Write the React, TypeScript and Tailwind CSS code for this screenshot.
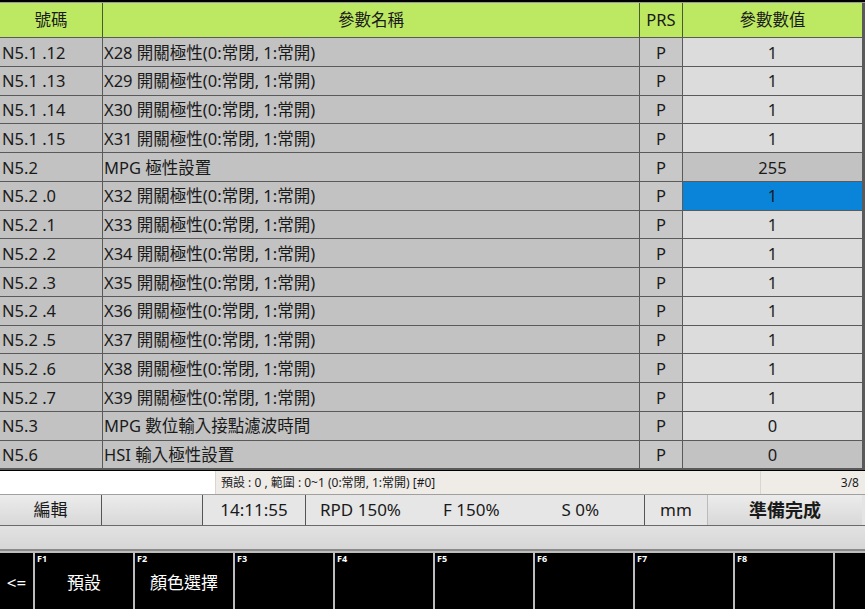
const rows: { code: string; name: string; value: string; dark?: boolean; selected?: boolean }[] = [
  { code: "N5.1 .12", name: "X28 開關極性(0:常閉, 1:常開)", value: "1" },
  { code: "N5.1 .13", name: "X29 開關極性(0:常閉, 1:常開)", value: "1" },
  { code: "N5.1 .14", name: "X30 開關極性(0:常閉, 1:常開)", value: "1" },
  { code: "N5.1 .15", name: "X31 開關極性(0:常閉, 1:常開)", value: "1" },
  { code: "N5.2", name: "MPG 極性設置", value: "255", dark: true },
  { code: "N5.2 .0", name: "X32 開關極性(0:常閉, 1:常開)", value: "1", selected: true },
  { code: "N5.2 .1", name: "X33 開關極性(0:常閉, 1:常開)", value: "1" },
  { code: "N5.2 .2", name: "X34 開關極性(0:常閉, 1:常開)", value: "1" },
  { code: "N5.2 .3", name: "X35 開關極性(0:常閉, 1:常開)", value: "1" },
  { code: "N5.2 .4", name: "X36 開關極性(0:常閉, 1:常開)", value: "1" },
  { code: "N5.2 .5", name: "X37 開關極性(0:常閉, 1:常開)", value: "1" },
  { code: "N5.2 .6", name: "X38 開關極性(0:常閉, 1:常開)", value: "1" },
  { code: "N5.2 .7", name: "X39 開關極性(0:常閉, 1:常開)", value: "1" },
  { code: "N5.3", name: "MPG 數位輸入接點濾波時間", value: "0" },
  { code: "N5.6", name: "HSI 輸入極性設置", value: "0", dark: true },
];

const fkeys = [
  { k: "F1", label: "預設" },
  { k: "F2", label: "顏色選擇" },
  { k: "F3", label: "" },
  { k: "F4", label: "" },
  { k: "F5", label: "" },
  { k: "F6", label: "" },
  { k: "F7", label: "" },
  { k: "F8", label: "" },
];

const cols = "grid grid-cols-[102px_536px_42px_179px] gap-x-px";

export default function App() {
  return (
    <div
      className="w-[865px] h-[609px] overflow-hidden bg-black flex flex-col text-[16.5px] text-[#1a1a1a]"
      style={{ fontFamily: '"Noto Sans", "Noto Sans CJK TC", sans-serif' }}
    >
      <div className="h-[2px] bg-black" />
      <div className="h-px bg-[#9a9a9a]" />
      <div className="flex-1 flex flex-col bg-[#5a5a5a] pr-[3px] gap-y-px">
        {/* header */}
        <div className={`${cols} h-[34px] bg-[#4a5a30]`}>
          <div className="bg-[#bde962] flex items-center justify-center">號碼</div>
          <div className="bg-[#bde962] flex items-center justify-center">參數名稱</div>
          <div className="bg-[#bde962] flex items-center justify-center">PRS</div>
          <div className="bg-[#bde962] flex items-center justify-center">參數數值</div>
        </div>
        {rows.map((r) => (
          <div key={r.code} className={`${cols} h-[27.75px]`}>
            <div className="bg-[#c2c2c2] flex items-center pl-[2px] pt-[2px] leading-none">{r.code}</div>
            <div className="bg-[#c2c2c2] flex items-center pl-[1px] pt-[2px] leading-none">{r.name}</div>
            <div className="bg-[#c8c8c8] flex items-center justify-center pt-[2px] leading-none">P</div>
            <div
              className={`flex items-center justify-center pt-[2px] leading-none ${
                r.selected ? "bg-[#0a84d9]" : r.dark ? "bg-[#c2c2c2]" : "bg-[#dcdcdc]"
              }`}
            >
              {r.value}
            </div>
          </div>
        ))}
      </div>
      {/* status line */}
      <div className="h-[23px] flex bg-[#d8d6d2] gap-x-px text-[12px] mt-px">
        <div className="w-[215px] bg-white" />
        <div className="flex-1 bg-[#efece8] flex items-center pl-[5px]">預設 : 0 , 範圍 : 0~1 (0:常閉, 1:常開) [#0]</div>
        <div className="w-[104px] bg-[#efece8] flex items-center justify-end pr-[6px]">3/8</div>
      </div>
      {/* info bar */}
      <div className="h-[32px] flex bg-[#e4e4e4] text-[17px] border-t border-[#a0a0a0] border-b border-b-[#6a6a6a]">
        <div className="w-[102px] flex items-center justify-center bg-gradient-to-b from-[#ececec] to-[#d8d8d8] border-r border-[#555]">編輯</div>
        <div className="w-[101px] bg-gradient-to-b from-[#ececec] to-[#d8d8d8] border-r border-[#555]" />
        <div className="w-[103px] flex items-center justify-center bg-[#e6e6e6] border-r border-[#555]">14:11:55</div>
        <div className="w-[339px] flex items-center bg-[#e6e6e6] border-r border-[#555]">
          <span className="pl-[14px]">RPD 150%</span>
          <span className="pl-[42px]">F 150%</span>
          <span className="pl-[62px]">S 0%</span>
        </div>
        <div className="w-[63px] flex items-center justify-center bg-[#e6e6e6] border-r border-[#bbb]">mm</div>
        <div className="flex-1 flex items-center justify-center font-bold text-[18px] bg-gradient-to-b from-[#ececec] to-[#d8d8d8] mr-[3px]">準備完成</div>
      </div>
      <div className="h-[25px] bg-gradient-to-b from-[#e2e2e2] to-[#d6d6d6] border-b-2 border-[#8a8a8a]" />
      {/* function keys */}
      <div className="flex-none h-[58px] flex bg-[#bdbdbd] gap-x-[2px] pt-[2px]">
        <div className="w-[33px] bg-black text-white flex items-center justify-center text-[17px] pt-[3px]">&lt;=</div>
        {fkeys.map((f) => (
          <div key={f.k} className="w-[98px] bg-black text-white relative flex items-center justify-center">
            <span className="absolute left-[2px] top-0 text-[9px] font-bold leading-[12px]">{f.k}</span>
            <span className="text-[17px] pt-[4px]">{f.label}</span>
          </div>
        ))}
        <div className="flex-1 bg-black" />
      </div>
    </div>
  );
}
